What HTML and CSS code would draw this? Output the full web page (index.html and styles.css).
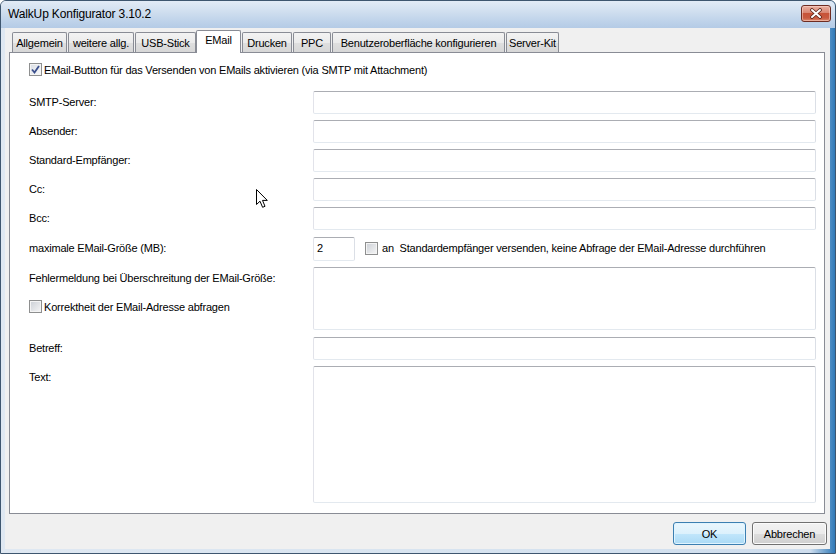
FILE: index.html
```html
<!DOCTYPE html>
<html lang="de">
<head>
<meta charset="utf-8">
<title>WalkUp Konfigurator 3.10.2</title>
<link rel="stylesheet" href="styles.css">
</head>
<body>
<div class="window">
  <div class="titlebar">
    <span class="title">WalkUp Konfigurator 3.10.2</span>
    <div class="close">
      <svg width="14" height="11" viewBox="0 0 14 11">
        <path d="M3 2 L11 9 M11 2 L3 9" stroke="#5a2318" stroke-width="3.6" stroke-linecap="round"/>
        <path d="M3 2 L11 9 M11 2 L3 9" stroke="#fff" stroke-width="2" stroke-linecap="round"/>
      </svg>
    </div>
  </div>
  <div class="client">
    <div class="tabs">
      <div class="tab t1">Allgemein</div>
      <div class="tab t2">weitere allg.</div>
      <div class="tab t3">USB-Stick</div>
      <div class="tab t4 active">EMail</div>
      <div class="tab t5">Drucken</div>
      <div class="tab t6">PPC</div>
      <div class="tab t7">Benutzeroberfläche konfigurieren</div>
      <div class="tab t8">Server-Kit</div>
    </div>
    <div class="panel">
      <div class="check-row">
        <span class="cb checked">
          <svg width="9" height="9" viewBox="0 0 9 9"><path d="M1 4.5 L3.5 7.5 L8 1" fill="none" stroke="#3b4f8c" stroke-width="1.8"/></svg>
        </span>
        <span>EMail-Buttton für das Versenden von EMails aktivieren (via SMTP mit Attachment)</span>
      </div>
      <div class="form">
        <div class="row"><div class="label">SMTP-Server:</div><div class="field"></div></div>
        <div class="row"><div class="label">Absender:</div><div class="field"></div></div>
        <div class="row"><div class="label">Standard-Empfänger:</div><div class="field"></div></div>
        <div class="row"><div class="label">Cc:</div><div class="field"></div></div>
        <div class="row"><div class="label">Bcc:</div><div class="field"></div></div>
        <div class="row shift">
          <div class="label">maximale EMail-Größe (MB):</div>
          <div class="field small">2</div>
          <div class="inline-check">
            <span class="cb"></span>
            <span>an&nbsp; Standardempfänger versenden, keine Abfrage der EMail-Adresse durchführen</span>
          </div>
        </div>
        <div class="row">
          <div class="label-col">
            <div class="label">Fehlermeldung bei Überschreitung der EMail-Größe:</div>
            <div class="check-row sub">
              <span class="cb"></span>
              <span>Korrektheit der EMail-Adresse abfragen</span>
            </div>
          </div>
          <div class="field area-err"></div>
        </div>
        <div class="row shift"><div class="label">Betreff:</div><div class="field"></div></div>
        <div class="row"><div class="label">Text:</div><div class="field area-text"></div></div>
      </div>
    </div>
    <div class="buttons">
      <div class="btn default">OK</div>
      <div class="btn wide">Abbrechen</div>
    </div>
  </div>
  <svg class="cursor" width="13" height="20" viewBox="0 0 13 20">
    <path d="M0.5 0.5 L0.5 15.5 L4 12.2 L6.6 18.3 L9 17.3 L6.5 11.4 L11.3 11.4 Z" fill="#fff" stroke="#000" stroke-width="1" stroke-linejoin="miter"/>
  </svg>
</div>
</body>
</html>
```
FILE: styles.css
```css
* { box-sizing: border-box; }

html, body {
  margin: 0;
  padding: 0;
  background: #fff;
}

body {
  font-family: "Liberation Sans", Arial, sans-serif;
  font-size: 11px;
  letter-spacing: -0.2px;
  color: #000;
}

.window {
  position: relative;
  width: 836px;
  height: 554px;
  border: 1px solid #3e566f;
  border-radius: 6px 6px 0 0;
  background: linear-gradient(to right, #dfe8f2 0, #d8e4f0 50%, #cfdeee 97%, #2f79b8 100%);
  display: flex;
  flex-direction: column;
  overflow: hidden;
}

.titlebar {
  height: 27px;
  flex: none;
  display: flex;
  align-items: flex-start;
  justify-content: space-between;
  padding: 4px 4px 0 7px;
  background: linear-gradient(#e2ebf6 0, #d2e0f0 35%, #bcd1e9 80%, #b4cbe6 100%);
}

.title {
  font-family: "Liberation Sans", Arial, sans-serif;
  font-size: 12px;
  letter-spacing: -0.15px;
  line-height: 16px;
  margin-top: 1px;
  color: #000;
}

.close {
  width: 30px;
  height: 17px;
  border: 1px solid #6e2c22;
  border-radius: 3px;
  background: linear-gradient(#eab0a2 0, #d98672 45%, #c75338 50%, #c85a40 80%, #dc8a6e 100%);
  box-shadow: inset 0 0 0 1px rgba(255, 220, 210, 0.5);
  display: flex;
  align-items: center;
  justify-content: center;
}

.client {
  flex: 1;
  margin: 0 5px 4px 4px;
  background: #f0f0f0;
  padding: 2px 5px 0 4px;
  display: flex;
  flex-direction: column;
}

.tabs {
  height: 22px;
  flex: none;
  display: flex;
  align-items: flex-end;
  gap: 1px;
  padding-left: 3px;
}

.tab {
  height: 20px;
  flex: none;
  border: 1px solid #898c95;
  border-bottom: none;
  border-radius: 2px 2px 0 0;
  padding-top: 1px;
  line-height: 19px;
  text-align: center;
  white-space: nowrap;
  background: linear-gradient(#f3f3f3, #ebebeb 50%, #dfdfdf 51%, #d7d7d7);
}

.t1 { width: 55px; }
.t2 { width: 66px; }
.t3 { width: 61px; }
.t4 { width: 45px; }
.t5 { width: 50px; }
.t6 { width: 38px; }
.t7 { width: 173px; }
.t8 { width: 53px; }

.tab.active {
  position: relative;
  z-index: 1;
  height: 23px;
  margin: 0 0 -1px -1px;
  padding-top: 0;
  background: #fff;
}

.panel {
  height: 462px;
  flex: none;
  border: 1px solid #898c95;
  background: #fff;
  padding: 10px 8px 0 19px;
}

.check-row {
  display: flex;
  align-items: center;
  height: 13px;
  gap: 2px;
  white-space: nowrap;
}

.cb {
  width: 13px;
  height: 13px;
  flex: none;
  border: 1px solid #8e8f8f;
  background: linear-gradient(135deg, #cbcfd5, #f6f6f6);
  box-shadow: inset 0 0 0 1px #f4f4f4;
  display: flex;
  align-items: center;
  justify-content: center;
}

.cb.checked {
  background: linear-gradient(135deg, #d9dde4, #fafafa);
}

.form {
  margin-top: 15px;
  display: flex;
  flex-direction: column;
  gap: 6px;
}

.row {
  display: flex;
  align-items: flex-start;
}

.row.shift {
  margin-top: 1px;
}

.label {
  width: 284px;
  flex: none;
  padding-top: 5px;
  line-height: 13px;
  white-space: nowrap;
}

.label-col {
  width: 284px;
  flex: none;
}

.check-row.sub {
  margin-top: 15px;
}

.field {
  width: 503px;
  height: 23px;
  flex: none;
  border: 1px solid;
  border-color: #abadb3 #dbdfe6 #e3e9ef #e2e3ea;
  border-radius: 2px;
  background: #fff;
}

.field.small {
  width: 42px;
  height: 24px;
  padding: 4px 0 0 3px;
  line-height: 13px;
}

.field.area-err {
  height: 63px;
}

.field.area-text {
  height: 137px;
}

.inline-check {
  display: flex;
  align-items: center;
  gap: 4px;
  margin-left: 10px;
  height: 22px;
  white-space: nowrap;
}

.buttons {
  display: flex;
  justify-content: flex-end;
  gap: 6px;
  margin-top: 8px;
  margin-right: -2px;
}

.btn {
  width: 73px;
  height: 23px;
  border: 1px solid #707070;
  border-radius: 3px;
  background: linear-gradient(#f2f2f2, #ebebeb 50%, #dddddd 51%, #cfcfcf);
  box-shadow: inset 0 0 0 1px #fbfbfb;
  display: flex;
  align-items: center;
  justify-content: center;
}

.btn.wide {
  width: 75px;
}

.btn.default {
  border-color: #3c7fb1;
  background: linear-gradient(#eaf6fd, #dcf1fc 50%, #c1e6fb 51%, #abdaf5);
  box-shadow: inset 0 0 0 1px #dff4ff;
}

.cursor {
  position: absolute;
  left: 255px;
  top: 188px;
}
```
